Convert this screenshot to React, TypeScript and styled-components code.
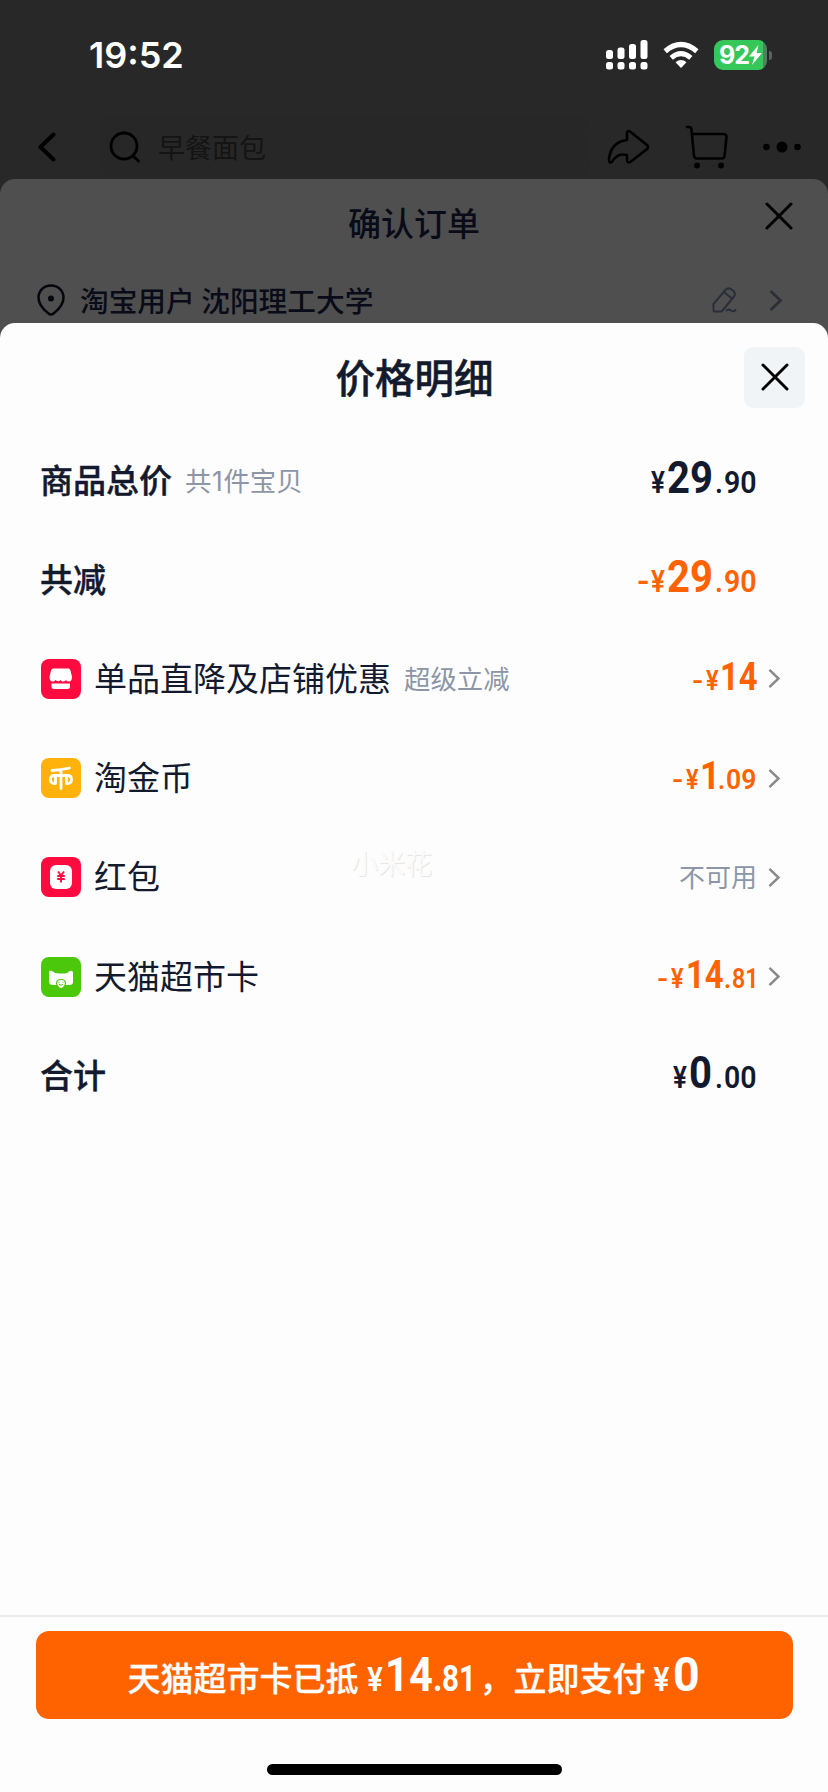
import React from "react";
import styled, { createGlobalStyle } from "styled-components";

const GlobalStyle = createGlobalStyle`
  * { box-sizing: border-box; }
  body {
    margin: 0;
    background: #282828;
    font-family: "Noto Sans CJK SC", sans-serif;
    color: #131a2e;
    overflow: hidden;
  }
`;

const Screen = styled.div`
  display: flex;
  flex-direction: column;
  width: 828px;
  height: 1792px;
  overflow: hidden;
  background: #282828;
`;

const StatusBar = styled.header`
  display: flex;
  align-items: center;
  height: 110px;
  flex: none;
  padding: 0 56px 0 89px;
`;

const Time = styled.span`
  flex: 1;
  font: 600 36px/44px Inter, sans-serif;
  color: #fff;
`;

const StatusIcons = styled.div`
  display: flex;
  align-items: center;
  gap: 15px;
`;

const Battery = styled.div`
  display: flex;
  align-items: center;
  gap: 2px;
`;

const BatteryBody = styled.div`
  display: flex;
  align-items: center;
  width: 53px;
  height: 30px;
  padding-left: 5px;
  border-radius: 9px;
  background: linear-gradient(90deg, #35c759 49px, #557e5e 49px);
  font: 700 25px/30px Inter, sans-serif;
  letter-spacing: -1px;
  color: #fff;
`;

const BatteryTip = styled.i`
  width: 3px;
  height: 9px;
  border-radius: 0 4px 4px 0;
  background: #606060;
`;

const NavBar = styled.nav`
  display: flex;
  align-items: center;
  height: 69px;
  flex: none;
  padding: 5px 27px 0 37px;
`;

const SearchBox = styled.div`
  display: flex;
  align-items: center;
  flex: 1;
  height: 60px;
  margin: 0 17px 0 44px;
  padding-left: 8px;
  gap: 17px;
  border-radius: 12px;
  background: #272727;
  font-size: 27px;
  line-height: 40px;
  color: #141414;
`;

const NavIcons = styled.div`
  display: flex;
  align-items: center;
  gap: 35px;
`;

const OrderSheet = styled.section`
  flex: none;
  height: 164px;
  border-radius: 15px 15px 0 0;
  background: #4f4f4f;
  color: #090c18;
`;

const OrderHeader = styled.div`
  display: grid;
  grid-template-columns: 1fr auto 1fr;
  align-items: center;
  height: 85px;
  padding: 0 35px;
`;

const OrderTitle = styled.h2`
  grid-column: 2;
  margin: 0;
  font-size: 33px;
  font-weight: 500;
  line-height: 48px;
`;

const OrderClose = styled.div`
  display: flex;
  justify-self: end;
  margin-top: -11px;
`;

const AddressRow = styled.div`
  display: flex;
  align-items: center;
  height: 72px;
  padding: 0 45px 0 37px;
`;

const Address = styled.span`
  flex: 1;
  margin-left: 15px;
  font-size: 28.7px;
  font-weight: 500;
  line-height: 40px;
`;

const AddressActions = styled.div`
  display: flex;
  align-items: center;
  gap: 32px;
`;

const PriceSheet = styled.section`
  position: relative;
  display: flex;
  flex: 1;
  flex-direction: column;
  margin-top: -20px;
  border-radius: 15px 15px 0 0;
  background: #fdfdfd;
`;

const SheetHeader = styled.div`
  display: grid;
  grid-template-columns: 1fr auto 1fr;
  align-items: center;
  height: 108px;
  padding: 0 23px 0 24px;
`;

const SheetTitle = styled.h1`
  grid-column: 2;
  margin: 0;
  padding-bottom: 3px;
  font-size: 39.5px;
  font-weight: 500;
  line-height: 56px;
  -webkit-text-stroke: 0.5px currentColor;
`;

const CloseButton = styled.button`
  display: flex;
  align-items: center;
  justify-content: center;
  justify-self: end;
  width: 61px;
  height: 61px;
  padding: 0;
  border: 0;
  border-radius: 9px;
  background: #f1f4f7;
`;

const Rows = styled.div`
  display: flex;
  flex: 1;
  flex-direction: column;
`;

const Row = styled.div`
  display: flex;
  align-items: center;
  height: 99.2px;
  padding-left: 41px;
`;

const RowIcon = styled.svg`
  width: 40px;
  height: 40px;
  margin-right: 13px;
`;

const Label = styled.span<{ $strong?: boolean }>`
  margin-left: ${(p) => (p.$strong ? -1 : 0)}px;
  padding-bottom: 4px;
  font-size: 33px;
  line-height: 48px;
  font-weight: ${(p) => (p.$strong ? 500 : 400)};
  -webkit-text-stroke: ${(p) => (p.$strong ? 0.4 : 0)}px currentColor;
`;

const Note = styled.span`
  margin-left: 13px;
  padding-bottom: 1px;
  font-size: 26.4px;
  font-weight: 400;
  line-height: 40px;
  color: #8c96a6;
`;

const NoteCount = styled.span`
  display: inline-block;
  width: 12px;
  font-family: Inter, sans-serif;
  text-align: center;
`;

const Value = styled.div<{ $tone?: "orange" | "muted" }>`
  display: flex;
  align-items: baseline;
  margin-left: auto;
  line-height: 48px;
  color: ${(p) =>
    p.$tone === "orange" ? "#ff6200" : p.$tone === "muted" ? "#8c96a6" : "#131a2e"};
`;

const Unavailable = styled.span`
  padding-bottom: 2px;
  font-size: 26px;
`;

const ArrowSlot = styled.div`
  display: flex;
  width: 71px;
  padding-left: 11px;
`;

const Digits = styled.span<{ $size: number; $w: number; $sx?: number; $weight?: number }>`
  flex: none;
  display: block;
  width: ${(p) => p.$w}px;
  font-family: Roboto, sans-serif;
  font-size: ${(p) => p.$size}px;
  font-weight: ${(p) => p.$weight ?? 700};
  white-space: nowrap;
  transform: scaleX(${(p) => p.$sx ?? 0.9});
  transform-origin: left;
`;

const Watermark = styled.span`
  position: absolute;
  left: 351px;
  top: 520px;
  font-size: 27px;
  line-height: 40px;
  color: #fbfbfb;
  text-shadow: 1px 1px 1px #e4e4e4;
`;

const Footer = styled.footer`
  display: flex;
  flex-direction: column;
  align-items: center;
  height: 177px;
  padding-top: 14px;
  border-top: 2px solid #eaeae8;
`;

const PayButton = styled.button`
  display: flex;
  align-items: baseline;
  width: 757px;
  height: 88px;
  padding: 0 0 0 92px;
  border: 0;
  border-radius: 13px;
  background: #ff6300;
  color: #fff;
  font: 500 33px/87px "Noto Sans CJK SC", sans-serif;
  white-space: nowrap;
`;

const PayText = styled.span<{ $w: number }>`
  flex: none;
  width: ${(p) => p.$w}px;
  text-align: left;
  -webkit-text-stroke: 0.3px currentColor;
`;

const HomeIndicator = styled.div`
  width: 295px;
  height: 11px;
  margin-top: 45px;
  border-radius: 6px;
  background: #000;
`;

const Cross = () => (
  <svg width="28" height="28" viewBox="0 0 28 28" fill="none" stroke="#000" strokeWidth="3" strokeLinecap="round">
    <path d="M2 2 26 26M26 2 2 26" />
  </svg>
);

const Chevron = ({ color = "#8a8a8a", h = 19 }: { color?: string; h?: number }) => (
  <svg width={h * 0.65} height={h} viewBox="0 0 13 20" fill="none" stroke={color} strokeWidth="2.6">
    <path d="M1.5 1 11 10 1.5 19" />
  </svg>
);

type Part = [text: string, width: number, kind: "s" | "y" | "b" | "d", scale?: number];

const Price = ({ parts, big, small }: { parts: Part[]; big: number; small: number }) => (
  <>
    {parts.map(([text, w, kind, sx], i) => (
      <Digits
        key={i}
        $w={w}
        $size={kind === "b" ? big : small}
        $sx={sx ?? (kind === "s" ? 1.1 : kind === "y" ? 0.84 : 0.9)}
        $weight={kind === "b" ? 700 : 600}
      >
        {text}
      </Digits>
    ))}
  </>
);

export default function App() {
  return (
    <Screen>
      <GlobalStyle />
      <StatusBar>
        <Time>19:52</Time>
        <StatusIcons>
          <svg width="42" height="30" viewBox="0 0 42 30" fill="#fff">
            <rect x="0" y="10" width="7" height="9" rx="2.5" />
            <rect x="11.5" y="7.5" width="7" height="11.5" rx="2.5" />
            <rect x="23" y="4" width="7" height="15" rx="2.5" />
            <rect x="34.5" y="0" width="7" height="19" rx="2.5" />
            <rect x="0" y="22" width="7" height="7.5" rx="2.5" />
            <rect x="11.5" y="22" width="7" height="7.5" rx="2.5" />
            <rect x="23" y="22" width="7" height="7.5" rx="2.5" />
            <rect x="34.5" y="22" width="7" height="7.5" rx="2.5" />
          </svg>
          <svg width="36" height="28" viewBox="0 0 36 28" fill="none">
            <path d="M2.2 10.2Q18-3.2 33.8 10.2" stroke="#fff" strokeWidth="5.2" />
            <path d="M8.2 16.8Q18 8.600 27.800 16.800" stroke="#fff" strokeWidth="5" />
            <path d="M12.5 21.2Q18 17 23.5 21.2L18 27Z" fill="#fff" />
          </svg>
          <Battery>
            <BatteryBody>
              92
              <svg width="13" height="20" viewBox="0 0 13 20" fill="#fff">
                <path d="M9.5 0 0 11.5H5.5L3 20 13 8H7.5Z" />
              </svg>
            </BatteryBody>
            <BatteryTip />
          </Battery>
        </StatusIcons>
      </StatusBar>

      <NavBar>
        <svg width="20" height="30" viewBox="0 0 20 30" fill="none" stroke="#000" strokeWidth="4" strokeLinecap="round" strokeLinejoin="round">
          <path d="M16.5 2.5 3.5 15 16.5 27.5" />
        </svg>
        <SearchBox>
          <svg width="32" height="32" viewBox="0 0 32 32" fill="none" stroke="#000" strokeWidth="2.8" strokeLinecap="round">
            <circle cx="15" cy="15" r="13" />
            <path d="M24 25 29.5 30" />
          </svg>
          早餐面包
        </SearchBox>
        <NavIcons>
          <svg width="43" height="36" viewBox="0 0 43 36" fill="none" stroke="#000" strokeWidth="2.600" strokeLinejoin="round">
            <path d="M20 4Q20 1 23 2.500L40 16Q42 18 40 20L24 32.500Q20 35 20 31V26Q10 23.500 5 33Q2 35 2 30Q4 13 20 11Z" />
          </svg>
          <svg width="43" height="44" viewBox="0 0 43 44" fill="none" stroke="#000" strokeWidth="2.600" strokeLinecap="round" strokeLinejoin="round">
            <path d="M2 2H4Q6.5 2 6.5 5L9 31Q9.5 33.5 12 33.5H37Q39 33.5 39.5 31L41.5 12Q41.5 9 38.5 9H7.500" />
            <circle cx="12" cy="40.5" r="3" fill="#000" stroke="none" />
            <circle cx="36" cy="40.5" r="3" fill="#000" stroke="none" />
          </svg>
          <svg width="38" height="12" viewBox="0 0 38 12">
            <circle cx="3.5" cy="6" r="3.3" />
            <circle cx="19" cy="6" r="5.5" />
            <circle cx="34.5" cy="6" r="3.3" />
          </svg>
        </NavIcons>
      </NavBar>

      <OrderSheet>
        <OrderHeader>
          <OrderTitle>确认订单</OrderTitle>
          <OrderClose>
            <Cross />
          </OrderClose>
        </OrderHeader>
        <AddressRow>
          <svg width="28" height="32" viewBox="0 0 28 32" fill="none" stroke="#05060d" strokeWidth="2.5">
            <path d="M14 1.5C6.5 1.5 1.5 7 1.5 13.5C1.5 20 5 24.5 11.5 29.5Q14 31.5 16.5 29.5C23 24.5 26.5 20 26.5 13.5C26.5 7 21.5 1.5 14 1.5Z" />
            <circle cx="14" cy="14.5" r="3" fill="#05060d" stroke="none" />
          </svg>
          <Address>淘宝用户 沈阳理工大学</Address>
          <AddressActions>
            <svg width="25" height="26" viewBox="0 0 25 26" fill="none" stroke="#2a2e38" strokeWidth="2" strokeLinejoin="round">
              <path d="M1.500 17 13.500 2.800Q16.500 0 20 2.800Q24.500 6 22 9.500L10.500 23.500Q10 24.500 8.500 24.500H3Q1.500 24.500 1.500 23ZM12.500 5.500 20 11.500M14 24Q16.500 21.500 19 23.500T24 22.500" />
            </svg>
            <Chevron color="#2a2e38" h={21} />
          </AddressActions>
        </AddressRow>
      </OrderSheet>

      <PriceSheet>
        <SheetHeader>
          <SheetTitle>价格明细</SheetTitle>
          <CloseButton>
            <Cross />
          </CloseButton>
        </SheetHeader>
        <Rows>
          <Row>
            <Label $strong>商品总价</Label>
            <Note>
              共<NoteCount>1</NoteCount>件宝贝
            </Note>
            <Value>
              <Price big={43.5} small={31} parts={[["¥", 16, "y"], ["29", 48, "b", 0.92], [".", 9, "d"], ["90", 33, "d", 0.92]]} />
            </Value>
            <ArrowSlot />
          </Row>
          <Row>
            <Label $strong>共减</Label>
            <Value $tone="orange">
              <Price big={43.5} small={31} parts={[["-", 14, "s"], ["¥", 16, "y"], ["29", 48, "b", 0.92], [".", 9, "d"], ["90", 33, "d", 0.92]]} />
            </Value>
            <ArrowSlot />
          </Row>
          <Row>
            <RowIcon viewBox="0 0 40 40">
              <rect width="40" height="40" rx="8" fill="#ff0b40" />
              <path d="M12.5 9.500H27Q29 9.500 29.500 11.500L31 18Q31 22.500 27.500 22.500Q25.500 22.500 25 21Q23.500 23 21 22.500L19.500 21Q17.500 23.500 14.500 21Q12.500 23.500 10 22Q8.500 21 8.500 18L10 11.500Q10.500 9.500 12.500 9.500Z" fill="#fff" />
              <path d="M10.5 24.500H29V27.500Q29 30 26.500 30H13Q10.500 30 10.500 27.500Z" fill="#fff" />
            </RowIcon>
            <Label>单品直降及店铺优惠</Label>
            <Note>超级立减</Note>
            <Value $tone="orange">
              <Price big={39} small={28} parts={[["-", 14, "s"], ["¥", 14, "y"], ["14", 37, "b", 0.84]]} />
            </Value>
            <ArrowSlot>
              <Chevron />
            </ArrowSlot>
          </Row>
          <Row>
            <RowIcon viewBox="0 0 40 40">
              <rect width="40" height="40" rx="8" fill="#ffb20a" />
              <path d="M11 12.500Q20 12 28.500 10M20 12V30.500M14.500 25.500H13.500Q9.500 25.500 9.500 21.500T13.500 17.500H26.500Q30.500 17.500 30.500 21.500T26.500 25.500H25.500M14.500 18V25M25.500 18V25" fill="none" stroke="#fff" strokeWidth="2.800" strokeLinecap="round" strokeLinejoin="round" />
            </RowIcon>
            <Label>淘金币</Label>
            <Value $tone="orange">
              <Price big={39} small={28} parts={[["-", 14, "s"], ["¥", 14, "y"], ["1", 18, "b"], [".", 8, "d"], ["09", 31, "d", 0.95]]} />
            </Value>
            <ArrowSlot>
              <Chevron />
            </ArrowSlot>
          </Row>
          <Row>
            <RowIcon viewBox="0 0 40 40">
              <rect width="40" height="40" rx="8" fill="#ff0b40" />
              <rect x="9" y="8" width="22" height="24" rx="6" fill="#fff" />
              <path d="M17 14.500 20 18.500 23 14.500M20 18.500V25.500M16.200 19H23.800M16.200 22H23.800" fill="none" stroke="#ff0b40" strokeWidth="1.900" />
            </RowIcon>
            <Label>红包</Label>
            <Value $tone="muted">
              <Unavailable>不可用</Unavailable>
            </Value>
            <ArrowSlot>
              <Chevron />
            </ArrowSlot>
          </Row>
          <Row>
            <RowIcon viewBox="0 0 40 40">
              <rect width="40" height="40" rx="8" fill="#4cc80b" />
              <path d="M8 15Q8 12.500 11 14Q14 17 20 16.500Q26 17 28 14.500Q32 12.500 32 16V25Q32 28 28.500 28H12.500Q8 28 8 24.500Z" fill="#fff" />
              <path d="M20 22.500Q24.500 22.500 24.500 26.500Q24 30 20 31.800Q16 30 15.500 26.500Q15.500 22.500 20 22.500Z" fill="#fff" stroke="#4cc80b" strokeWidth="1.200" />
              <path d="M18 27.200Q20 29.300 22 27.200M18 25.200V26M22 25.200V26" fill="none" stroke="#4cc80b" strokeWidth="1" />
            </RowIcon>
            <Label>天猫超市卡</Label>
            <Value $tone="orange">
              <Price big={39} small={28} parts={[["-", 14, "s"], ["¥", 15, "y"], ["14", 38, "b", 0.84], [".", 8, "d"], ["81", 25, "d", 0.83]]} />
            </Value>
            <ArrowSlot>
              <Chevron />
            </ArrowSlot>
          </Row>
          <Row>
            <Label $strong>合计</Label>
            <Value>
              <Price big={43.5} small={31} parts={[["¥", 16, "y"], ["0", 26, "b", 0.92], [".", 9, "d"], ["00", 33, "d", 0.92]]} />
            </Value>
            <ArrowSlot />
          </Row>
        </Rows>
        <Watermark>小米花</Watermark>
        <Footer>
          <PayButton>
            <PayText $w={239}>天猫超市卡已抵</PayText>
            <Digits $size={33} $w={18} $sx={0.88} $weight={600}>¥</Digits>
            <Digits $size={49} $w={48} $sx={0.85}>14</Digits>
            <Digits $size={36} $w={9}>.</Digits>
            <Digits $size={36} $w={38} $sx={0.82}>81</Digits>
            <PayText $w={34}>，</PayText>
            <PayText $w={138}>立即支付</PayText>
            <Digits $size={33} $w={21} $sx={0.9} $weight={600}>¥</Digits>
            <Digits $size={49} $w={26} $sx={0.95}>0</Digits>
          </PayButton>
          <HomeIndicator />
        </Footer>
      </PriceSheet>
    </Screen>
  );
}
